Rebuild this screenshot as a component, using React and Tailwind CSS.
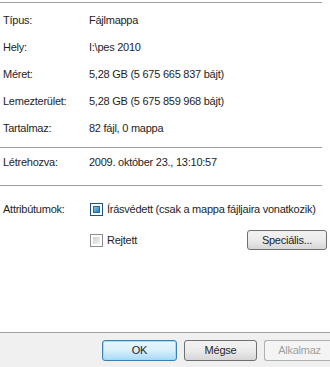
export default function App() {
  const font = { fontFamily: '"Liberation Sans", Arial, sans-serif' };
  const Row = ({ label, value, h }) => (
    <div className={`flex items-center ${h}`}>
      <div className="w-[89px] pl-[3px]">{label}</div>
      <div>{value}</div>
    </div>
  );
  return (
    <div className="w-[330px] h-[367px] bg-white flex flex-col text-[11px] tracking-[-0.25px] whitespace-nowrap text-[#1e1e1e] overflow-hidden" style={font}>
      <div className="flex-1 flex flex-col">
        <div className="h-[2px]" />
        <div className="h-px w-[322px] bg-[#a0a0a0]" />
        <div className="h-[4px]" />
        <Row label="Típus:" value="Fájlmappa" h="h-[27px]" />
        <Row label="Hely:" value="I:\pes 2010" h="h-[27px]" />
        <Row label="Méret:" value="5,28 GB (5 675 665 837 bájt)" h="h-[27px]" />
        <Row label="Lemezterület:" value="5,28 GB (5 675 859 968 bájt)" h="h-[27px]" />
        <Row label="Tartalmaz:" value="82 fájl, 0 mappa" h="h-[27px]" />
        <div className="h-[5px]" />
        <div className="h-px w-[322px] bg-[#a0a0a0]" />
        <Row label="Létrehozva:" value="2009. október 23., 13:10:57" h="h-[28px]" />
        <div className="h-[9px]" />
        <div className="h-px w-[322px] bg-[#a0a0a0]" />
        <div className="h-[14px]" />
        <div className="flex items-center h-[18px]">
          <div className="w-[90px] pl-[3px]">Attribútumok:</div>
          <div className="w-[13px] h-[13px] border border-[#1c5180] bg-white p-[2px] mr-[4px]">
            <div className="w-full h-full bg-gradient-to-br from-[#7fc4ea] to-[#1b7fc0] border border-[#2c6a99]" />
          </div>
          <div>Írásvédett (csak a mappa fájljaira vonatkozik)</div>
        </div>
        <div className="h-[12px]" />
        <div className="flex items-center h-[20px]">
          <div className="w-[90px]" />
          <div className="w-[13px] h-[13px] border border-[#8f8f8f] bg-white p-[2px] mr-[4px]">
            <div className="w-full h-full bg-gradient-to-br from-[#cfcfcf] to-[#f4f4f4]" />
          </div>
          <div>Rejtett</div>
          <div className="flex-1" />
          <div className="w-[80px] h-[20px] mr-[3px] rounded-[3px] border border-[#707070] bg-gradient-to-b from-[#f2f2f2] via-[#ebebeb] to-[#d6d6d6] flex items-center justify-center">
            Speciális...
          </div>
        </div>
      </div>
      <div className="h-[35px] bg-[#f0f0f0] border-t border-[#a0a0a0] flex items-center justify-end gap-[7px]">
        <div className="w-[75px] h-[21px] rounded-[3px] border border-[#3c7fb1] bg-gradient-to-b from-[#eaf6fd] via-[#d9f0fc] to-[#a7d9f5] flex items-center justify-center shadow-[inset_0_0_0_1px_#9ddcf9]">
          OK
        </div>
        <div className="w-[73px] h-[21px] rounded-[3px] border border-[#707070] bg-gradient-to-b from-[#f2f2f2] via-[#ebebeb] to-[#d6d6d6] flex items-center justify-center">
          Mégse
        </div>
        <div className="w-[66px] h-[21px] rounded-l-[3px] border border-r-0 border-[#adb2b5] bg-[#f4f4f4] text-[#a0a0a0] flex items-center justify-center pl-[4px]">
          Alkalmaz
        </div>
      </div>
    </div>
  );
}
